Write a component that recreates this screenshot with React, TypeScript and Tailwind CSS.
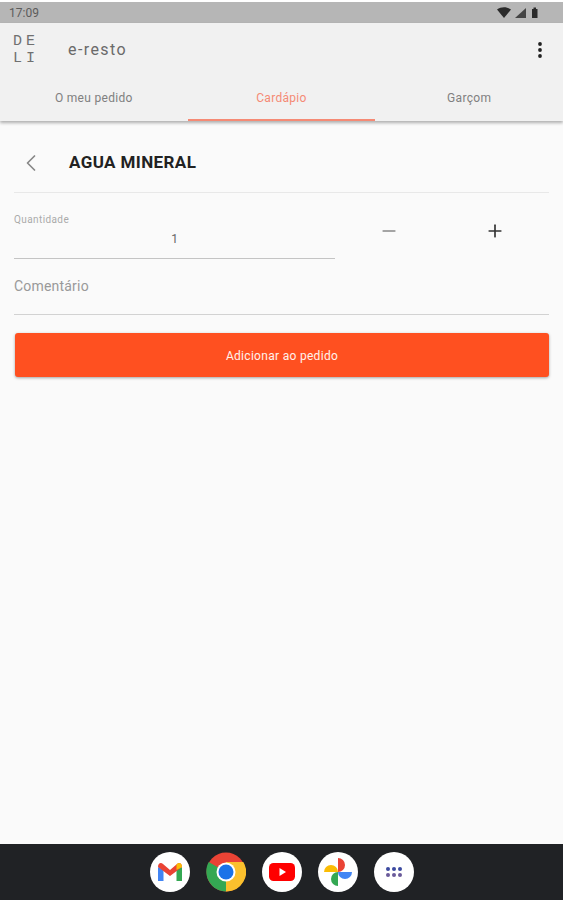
import { ChevronLeft, Minus, Plus } from "lucide-react";

const TABS = ["O meu pedido", "Cardápio", "Garçom"];

function StatusBar() {
  return (
    <div className="mt-[2px] h-[21px] bg-[#b6b6b6] flex items-center justify-between pl-[9px] pr-[24px] shrink-0">
      <span className="text-[12px] leading-none text-[#5c5c5c]">17:09</span>
      <svg width="42" height="14" viewBox="0 0 42 14" fill="#2a2a2a">
        <path d="M0 3.5 C4 0.5 10 0.5 14 3.5 L7 12 Z" />
        <path d="M29 2 V12 H18 Z" fill="#444" />
        <path d="M35 3 H36.5 V1.5 H39 V3 H40.5 V12 H35 Z" />
      </svg>
    </div>
  );
}

function Header() {
  return (
    <div className="bg-[#f1f1f1] shadow-[0_2px_3px_rgba(0,0,0,0.3)] z-10 shrink-0">
      <div className="h-[53px] flex items-center pl-[13px] pr-[20px]">
        <div className="w-[27px] text-[15px] leading-[17px] tracking-[4px] text-[#707070] font-['Liberation_Mono',monospace]">
          <div>DE</div>
          <div>LI</div>
        </div>
        <span className="ml-[28px] text-[16px] leading-[20px] tracking-[1.4px] text-[#6a6a6a]">e-resto</span>
        <svg className="ml-auto" width="6" height="18" viewBox="0 0 6 18" fill="#222">
          <circle cx="3" cy="3" r="1.9" />
          <circle cx="3" cy="9" r="1.9" />
          <circle cx="3" cy="15" r="1.9" />
        </svg>
      </div>
      <div className="grid grid-cols-3 h-[45px]">
        {TABS.map((t, i) => (
          <div
            key={t}
            className={`flex items-center justify-center text-[12px] tracking-[0.3px] border-b-2 ${
              i === 1 ? "text-[#f58a75] border-[#f58a75]" : "text-[#808080] border-transparent"
            }`}
          >
            {t}
          </div>
        ))}
      </div>
    </div>
  );
}

function Form() {
  return (
    <div className="flex-1 bg-[#fafafa] px-[14px]">
      <div className="h-[72px] pt-[12px] flex items-center border-b border-[#e8e8e8]">
        <ChevronLeft size={28} strokeWidth={1.5} className="text-[#888] ml-[3px]" />
        <h1 className="ml-[24px] text-[17px] font-bold text-[#222] tracking-[0.4px]">AGUA MINERAL</h1>
      </div>
      <div className="flex">
        <div className="w-[321px] h-[66px] border-b border-[#c4c4c4] pt-[21px]">
          <div className="text-[10px] leading-[12px] tracking-[0.4px] text-[#aaa]">Quantidade</div>
          <div className="text-[12px] leading-[14px] mt-[6px] text-center text-[#666]">1</div>
        </div>
        <div className="flex-1 flex justify-between pl-[44px] pr-[44px] pt-[28px]">
          <Minus size={20} strokeWidth={2} className="text-[#888]" />
          <Plus size={20} strokeWidth={2} className="text-[#333]" />
        </div>
      </div>
      <div className="h-[56px] border-b border-[#d2d2d2] pt-[18px] text-[14px] leading-[18px] tracking-[0.2px] text-[#999]">
        Comentário
      </div>
      <button className="mt-[18px] ml-[1px] w-[534px] h-[44px] pt-[2px] rounded-[3px] bg-[#ff5020] text-[12px] tracking-[0.3px] text-[#fff2ec] shadow-[0_1px_3px_rgba(0,0,0,0.35)]">
        Adicionar ao pedido
      </button>
    </div>
  );
}

function DockIcon({ children }: { children: React.ReactNode }) {
  return (
    <div className="w-[40px] h-[40px] rounded-full bg-white flex items-center justify-center overflow-hidden">
      {children}
    </div>
  );
}

function Dock() {
  return (
    <div className="h-[56px] bg-[#202225] flex items-center justify-center gap-[16px] shrink-0">
      <DockIcon>
        <svg width="26" height="20" viewBox="0 0 26 20" fill="none">
          <path d="M1 5 V19 H6.5 V8 Z" fill="#4285f4" />
          <path d="M25 5 V19 H19.5 V8 Z" fill="#34a853" />
          <path d="M1 5 C1 1 4 0 6 2 L13 8 L20 2 C22 0 25 1 25 5 L13 14 Z" fill="#ea4335" />
          <path d="M19.5 8 V2.5 L20 2 C22 0 25 1 25 5 Z" fill="#fbbc04" />
        </svg>
      </DockIcon>
      <svg width="40" height="40" viewBox="0 0 40 40">
        <circle cx="20" cy="20" r="19.5" fill="#ea4335" />
        <path d="M20 20 L2.7 10 A20 20 0 0 0 20 39.5 Z" fill="#34a853" />
        <path d="M20 20 L20 39.5 A19.5 19.5 0 0 0 37.3 10 L20 10 Z" fill="#fbc02d" />
        <circle cx="20" cy="20" r="9.5" fill="#fff" />
        <circle cx="20" cy="20" r="7.5" fill="#1a73e8" />
      </svg>
      <DockIcon>
        <svg width="26" height="18" viewBox="0 0 26 18">
          <rect width="26" height="18" rx="4.5" fill="#f00" />
          <path d="M10.5 5 L17 9 L10.5 13 Z" fill="#fff" />
        </svg>
      </DockIcon>
      <DockIcon>
        <svg width="32" height="32" viewBox="0 0 32 32">
          <path d="M16 16 V2 A7 7 0 0 1 16 16 Z" fill="#ea4335" />
          <path d="M16 16 H30 A7 7 0 0 1 16 16 Z" fill="#4285f4" />
          <path d="M16 16 V30 A7 7 0 0 1 16 16 Z" fill="#34a853" />
          <path d="M16 16 H2 A7 7 0 0 1 16 16 Z" fill="#fbbc04" />
        </svg>
      </DockIcon>
      <DockIcon>
        <div className="grid grid-cols-3 gap-[2px]">
          {["#3c4aa0", "#3c4aa0", "#3c4aa0", "#6a5a9a", "#6a5a9a", "#6a5a9a"].map((c, i) => (
            <span key={i} className="w-[4px] h-[4px] rounded-full" style={{ backgroundColor: c }} />
          ))}
        </div>
      </DockIcon>
    </div>
  );
}

export default function App() {
  return (
    <div className="w-[563px] h-[900px] flex flex-col bg-white font-['Roboto',sans-serif] overflow-hidden">
      <StatusBar />
      <Header />
      <Form />
      <Dock />
    </div>
  );
}
